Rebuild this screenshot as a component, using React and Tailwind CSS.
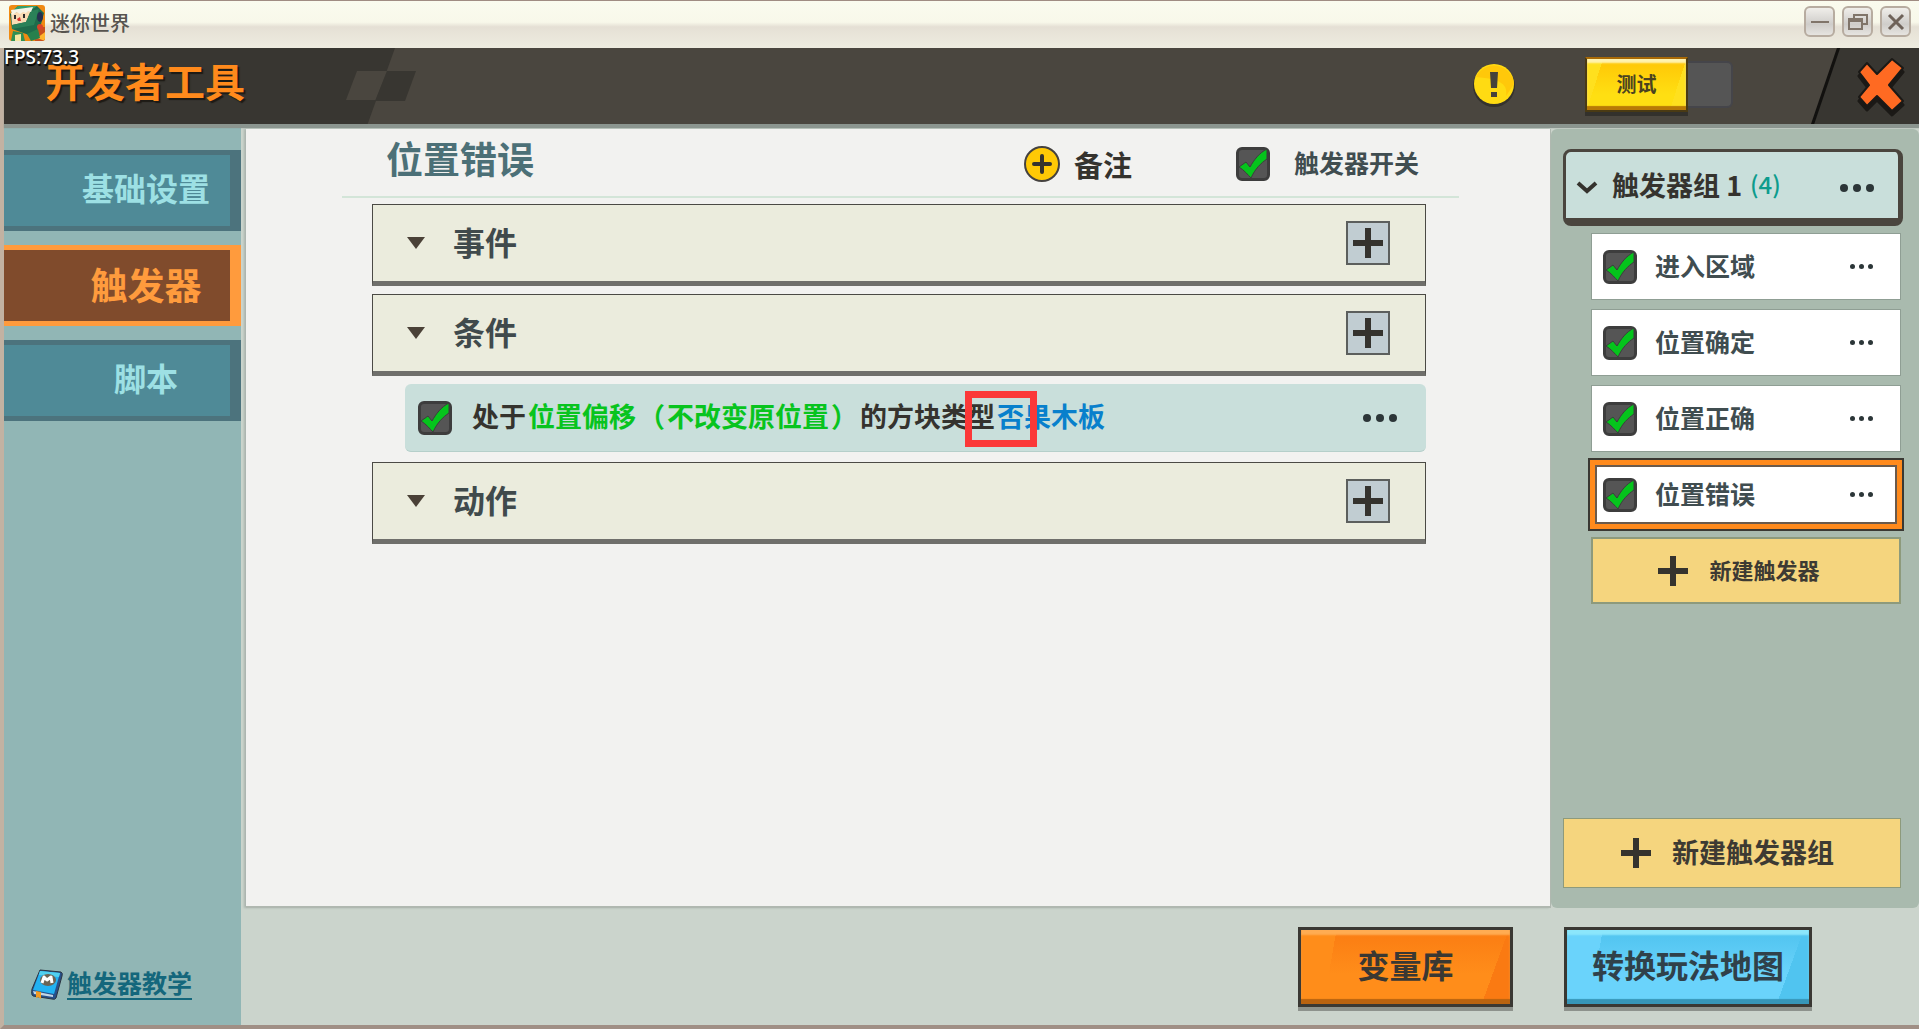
import { useState } from 'react';

const TRIGGERS = [
    { id: 1, name: '进入区域' },
    { id: 2, name: '位置确定' },
    { id: 3, name: '位置正确' },
    { id: 4, name: '位置错误' }
];

const MENU = [
    { id: 'base', label: '基础设置' },
    { id: 'trigger', label: '触发器' },
    { id: 'script', label: '脚本' }
];

const Check = ({ id, label }) => {
    const [checked, setChecked] = useState(true);

    return (
        <span className="grid h-[34px] w-[34px] shrink-0 *:[grid-area:1/1]">
            <input
                id={id}
                type="checkbox"
                aria-label={label}
                checked={checked}
                onChange={() => setChecked(!checked)}
                className="h-[34px] w-[34px] appearance-none rounded-md border-3 border-[#3d3d3d] bg-[#555555]"
            />
            {checked && (
                <svg
                    viewBox="0 0 34 34"
                    className="pointer-events-none h-[34px] w-[34px]">
                    <path
                        d="M3 20 L10 15 L14 20 C18 13 23 6 31 2 V12 C25 16 19 22 15 31 C12 28 8 23 3 20Z"
                        fill="#05c41c"
                        stroke="#3d3d3d"
                        strokeWidth="1"
                    />
                </svg>
            )}
        </span>
    );
};

const Dots = ({ small }) => (
    <button
        type="button"
        aria-label="更多"
        className={
            small
                ? 'flex gap-1 py-2 *:h-[5px] *:w-[5px]'
                : 'flex gap-[5px] py-2 *:h-2 *:w-2'
        }>
        <span className="rounded-full bg-[#2c3638]" />
        <span className="rounded-full bg-[#2c3638]" />
        <span className="rounded-full bg-[#2c3638]" />
    </button>
);

const Plus = () => (
    <svg viewBox="0 0 30 30" className="h-[30px] w-[30px] shrink-0">
        <path d="M15 0 V30 M0 15 H30" stroke="#35332e" strokeWidth="6" />
    </svg>
);

const Section = ({ title }) => (
    <section className="flex h-[82px] items-center border border-b-5 border-[#4b4a45] border-b-[#6f6f6b] bg-[#ebecdd] pr-[35px] pl-[34px]">
        <svg viewBox="0 0 18 12" className="mr-7 h-3 w-[18px]">
            <path d="M0 0 H18 L9 12Z" fill="#4a4137" />
        </svg>
        <h2 className="pb-1 text-[32px] leading-none font-bold text-[#404a4c]">
            {title}
        </h2>
        <button
            type="button"
            aria-label={`添加${title}`}
            className="ml-auto flex h-11 w-11 items-center justify-center border-2 border-[#5c5f5d] bg-[#c1cdd2]">
            <Plus />
        </button>
    </section>
);

const TitleBar = () => (
    <div className="flex h-12 items-center border-t border-[#a08c82] bg-[linear-gradient(#fafbee_0%,#f8f8ea_45%,#e5e0d5_55%,#eeece0_100%)] pr-2 pl-[9px]">
        <svg viewBox="0 0 36 36" className="mb-1 h-9 w-9">
            <defs>
                <clipPath id="logo">
                    <rect width="36" height="36" rx="3" />
                </clipPath>
            </defs>
            <g clipPath="url(#logo)">
                <rect width="36" height="36" fill="#f08a12" />
                <path d="M26 22 H36 V36 H26Z" fill="#c9501e" />
                <path d="M28 33 L36 27 V36Z" fill="#ffb52e" />
                <path d="M1 9 L9 1 H28 L35 8 L31 23 L20 30 L3 24Z" fill="#1f6b4b" />
                <path d="M9 1 H28 L22 5 L2 7Z" fill="#35a06c" />
                <path d="M2 8 L22 5 L17 17 L3 20Z" fill="#f8dcb4" />
                <path d="M17 17 L22 6 L30 4 L25 20 L3 24 V20Z" fill="#2a8158" />
                <path d="M2 5 L24 2 L22 7 L19 6 L17 8 L14 7 L11 9 L8 7 L3 10Z" fill="#f5f3e4" />
                <rect x="5" y="10" width="2" height="4" fill="#2b2b2b" />
                <rect x="14" y="9" width="2" height="4" fill="#2b2b2b" />
                <path d="M8 14 L11 12 L12 16 H9Z" fill="#d8342c" />
                <path d="M4 26 L14 28 L16 36 H2Z" fill="#2f9055" />
                <path d="M6 30 L12 29 V36 H6Z" fill="#f5e6a2" />
                <path d="M18 29 L29 24 L31 33 L22 36Z" fill="#27804d" />
                <ellipse cx="31" cy="12" rx="3" ry="5" fill="#26304f" />
                <circle cx="31" cy="22" r="3" fill="#d9442a" />
            </g>
        </svg>
        <span className="ml-[5px] pb-1 text-[20px] leading-none font-medium text-[#57544f]">
            迷你世界
        </span>
        <div className="mb-[6px] ml-auto flex gap-[7px] *:flex *:h-[31px] *:w-[31px] *:items-center *:justify-center *:rounded-md *:border-2 *:border-[#b7aca0] *:bg-[linear-gradient(#f0eeea,#cfcdca_60%,#e6e4e0)]">
            <button type="button" aria-label="最小化">
                <svg viewBox="0 0 20 20" className="h-5 w-5">
                    <path d="M1 10 H19" stroke="#80756a" strokeWidth="2" />
                </svg>
            </button>
            <button type="button" aria-label="还原">
                <svg viewBox="0 0 20 20" className="h-5 w-5" fill="none">
                    <path
                        d="M6 6 V3 H19 V12 H15 M1 7 H14 V17 H1Z M1 9 H14"
                        stroke="#80756a"
                        strokeWidth="2"
                    />
                </svg>
            </button>
            <button type="button" aria-label="关闭窗口">
                <svg viewBox="0 0 20 20" className="h-5 w-5">
                    <path
                        d="M3 3 L17 17 M17 3 L3 17"
                        stroke="#6e6259"
                        strokeWidth="3"
                    />
                </svg>
            </button>
        </div>
    </div>
);

const Header = () => (
    <header className="relative z-10 flex h-[76px] items-center bg-[#4a463f] shadow-[0_4px_1px_#8b958f]">
        <div className="h-full w-[391px] shrink-0 bg-[#383631] [clip-path:polygon(0_0,100%_0,93%_100%,0_100%)]">
            <h1 className="pt-3 pl-[41px] text-[40px] leading-none font-bold text-[#ff8a1c] [text-shadow:2px_2px_1px_#1d1a15]">
                开发者工具
            </h1>
        </div>
        <span className="absolute top-0 left-0 font-['Noto_Sans'] text-[19px] leading-[18px] font-medium text-white [text-shadow:1px_2px_1px_#000]">
            FPS:73.3
        </span>
        <svg
            viewBox="0 0 70 30"
            className="absolute top-[23px] left-[342px] h-[30px] w-[70px]">
            <path d="M11 0 H41 L30 29 H0Z" fill="#4a463f" />
            <path d="M41 0 H70 L59 30 H29Z" fill="#383631" />
        </svg>
        <div className="ml-auto flex h-full items-center">
            <button type="button" aria-label="提示" className="mr-[69px] mb-[3px]">
                <svg viewBox="0 0 44 44" className="h-11 w-11">
                    <circle cx="22" cy="23" r="21" fill="#34322d" />
                    <circle cx="22" cy="21" r="20" fill="#ffdb12" />
                    <path
                        d="M4 14 A20 20 0 0 1 42 21 L34 33 C36 22 30 16 4 14Z"
                        fill="#ffc80a"
                    />
                    <path d="M18 9 H26 L25 25 H19Z" fill="#45423b" />
                    <rect x="19" y="29" width="6" height="5" fill="#45423b" />
                </svg>
            </button>
            <div className="mr-[78px] flex items-center pb-1">
                <button
                    type="button"
                    className="h-[55px] w-[103px] border-2 border-[#4a3a14] border-t-[#a96a07] bg-[linear-gradient(108deg,#ffe01e_14%,transparent_14%,transparent_86%,#ffe01e_86%),linear-gradient(#ffc505,#ffdf12_70%)] text-[20px] leading-none font-bold text-[#4b4320] shadow-[inset_0_-4px_1px_#b97a06,inset_0_4px_2px_#fff3b0,0_4px_0_#33312c]">
                    测试
                </button>
                <span className="h-[47px] w-[45px] rounded-r-md border-2 border-l-0 border-[#45454a] bg-[#555555]" />
            </div>
            <div className="flex h-full w-[108px] items-center bg-[#12110f] [clip-path:polygon(24%_0,100%_0,100%_100%,0_100%)]">
                <div className="flex h-full w-full items-center justify-end bg-[#383631] pr-[14px] [clip-path:polygon(27%_0,100%_0,100%_100%,3%_100%)]">
                    <button type="button" aria-label="关闭">
                        <svg viewBox="-3 -3 50 62" className="h-[62px] w-[50px]">
                            <path
                                d="M1 18 L9 9 L19 20 L34 5 L45 14 L31 31 L45 47 L34 57 L19 42 L9 52 L1 43 L11 31Z"
                                fill="#1b1916"
                                stroke="#1b1916"
                                strokeWidth="3"
                                strokeLinejoin="round"
                            />
                            <path
                                d="M1 14 L9 5 L19 16 L34 1 L45 10 L31 27 L45 43 L34 53 L19 38 L9 48 L1 39 L11 27Z"
                                fill="#ff6a22"
                                stroke="#1b1916"
                                strokeWidth="2"
                                strokeLinejoin="round"
                            />
                        </svg>
                    </button>
                </div>
            </div>
        </div>
    </header>
);

const Sidebar = ({ active, onSelect }) => (
    <aside className="flex w-[237px] shrink-0 flex-col bg-[#91b6b5] pt-[26px]">
        <nav className="flex flex-col gap-[14px]">
            {MENU.map((item) => (
                <button
                    key={item.id}
                    type="button"
                    onClick={() => onSelect(item.id)}
                    className={
                        item.id === active
                            ? 'h-[81px] border-y-5 border-r-[11px] border-[#ff9b3d] bg-[#804b2c] pb-[2px] pl-[58px] text-[37px] leading-none font-bold text-[#ff9b3d]'
                            : 'h-[81px] border-y-5 border-r-[11px] border-[#4c737d] bg-[#4f8a97] pb-2 pl-[58px] text-[32px] leading-none font-bold text-[#9de0e4]'
                    }>
                    {item.label}
                </button>
            ))}
        </nav>
        <a
            href="#tutorial"
            className="mt-auto mb-6 ml-[26px] flex items-center gap-[3px] self-start text-[#14677c]">
            <svg viewBox="0 0 34 32" className="h-8 w-[34px]">
                <path
                    d="M10 1 L31 3 Q33 4 32 7 L26 29 Q25 31 22 30 L3 27 Q1 26 2 20Z"
                    fill="#27508a"
                    stroke="#2b3440"
                    strokeWidth="1"
                />
                <path d="M3 22 L23 26 L23 28 L4 25Z" fill="#c4d6e6" />
                <path d="M10 2 L30 4 L24 25 L3 21Z" fill="#22b2f2" />
                <path d="M10 2 L30 4 L29 8 L9 6Z" fill="#52d0ef" />
                <path d="M6 22 L11 23 V30 L8 28 L6 29Z" fill="#f39a20" />
                <ellipse cx="18" cy="11" rx="8" ry="6" fill="#6b6455" />
                <path
                    d="M12 14 L14 8 L17 11 L21 8 L22 14"
                    fill="none"
                    stroke="#ffffff"
                    strokeWidth="3"
                    strokeLinejoin="round"
                />
            </svg>
            <span className="border-b-2 border-[#14677c] pb-[3px] text-[25px] leading-none font-bold">
                触发器教学
            </span>
        </a>
    </aside>
);

const Editor = () => (
    <main className="flex-1 border-r border-b-2 border-[#b0b8b0] bg-[#f2f2f0] shadow-[-2px_0_2px_#aab5ae]">
        <div className="mr-[91px] ml-24 flex h-[69px] items-center border-b-2 border-[#d3e5d8] pr-10 pl-11">
            <h2 className="mb-2 text-[37px] leading-none font-bold text-[#4c7077]">
                位置错误
            </h2>
            <button
                type="button"
                className="mt-[3px] ml-auto flex items-center gap-[14px] text-[29px] leading-none font-bold text-[#35332e]">
                <svg viewBox="0 0 36 36" className="h-9 w-9">
                    <circle
                        cx="18"
                        cy="18"
                        r="17"
                        fill="#ffc905"
                        stroke="#45423f"
                        strokeWidth="2"
                    />
                    <path
                        d="M18 10 V26 M10 18 H26"
                        stroke="#35332e"
                        strokeWidth="4"
                        strokeLinecap="round"
                    />
                </svg>
                备注
            </button>
            <div className="mt-[2px] ml-[104px] flex items-center gap-6">
                <Check id="trigger-switch" />
                <label
                    htmlFor="trigger-switch"
                    className="pb-[2px] text-[25px] leading-none font-bold text-[#404d50]">
                    触发器开关
                </label>
            </div>
        </div>
        <div className="mt-[6px] mr-[124px] ml-[126px] flex flex-col gap-2">
            <Section title="事件" />
            <Section title="条件" />
            <div className="mb-[2px] ml-[33px] flex h-[68px] items-center rounded-md border-b border-[#b5cfca] bg-[#c9dfdb] pr-[29px] pl-[13px]">
                <Check label="启用条件" />
                <p className="mb-[5px] ml-5 flex gap-[2px] text-[27px] leading-none font-bold text-[#35332e]">
                    <span>处于</span>
                    <span className="flex gap-[2px] text-[#08c41e]">
                        <span>位置偏移</span>
                        <span>（</span>
                        <span>不改变原位置</span>
                        <span>）</span>
                    </span>
                    <span>的方块类型</span>
                    <span className="relative text-[#0880cc]">
                        否果木板
                        <span className="absolute -top-[11px] -left-8 h-14 w-[72px] border-7 border-[#fb3838]" />
                    </span>
                </p>
                <div className="ml-auto flex">
                    <Dots />
                </div>
            </div>
            <Section title="动作" />
        </div>
    </main>
);

const TriggerPanel = () => {
    const [selected, setSelected] = useState(4);

    return (
        <aside className="flex w-[368px] shrink-0 flex-col rounded-md bg-[#a9baae] pt-5 pr-4 pb-5 pl-3">
            <div className="flex h-[77px] items-center rounded-lg border-3 border-r-5 border-b-8 border-[#4a453e] bg-[#c9dfdb] pt-[6px] pr-[24px] pl-[10px]">
                <svg viewBox="0 0 22 14" className="h-[14px] w-[22px]">
                    <path
                        d="M2 2 L11 10 L20 2"
                        fill="none"
                        stroke="#35332e"
                        strokeWidth="4"
                    />
                </svg>
                <h2 className="mb-2 ml-[14px] flex items-center gap-2 text-[27px] leading-none font-bold text-[#35332e]">
                    触发器组 1
                    <span className="text-[24px] font-medium text-[#0d9c8d]">
                        (4)
                    </span>
                </h2>
                <div className="ml-auto flex">
                    <Dots />
                </div>
            </div>
            <ul className="mt-[7px] mr-[2px] ml-7 flex flex-col gap-[9px]">
                {TRIGGERS.map((trigger) => (
                    <li
                        key={trigger.id}
                        onClick={() => setSelected(trigger.id)}
                        className={
                            trigger.id === selected
                                ? 'flex h-[67px] items-center bg-white pr-7 pl-3 shadow-[inset_0_0_0_4px_#ff8a1c,inset_0_0_0_6px_#6a5a4c,0_0_0_1px_#ff8a1c,0_0_0_3px_#3a3833]'
                                : 'flex h-[67px] items-center border border-[#8f9e94] bg-white pr-[27px] pl-[11px]'
                        }>
                        <Check label={trigger.name} />
                        <span className="ml-[18px] pb-[2px] text-[25px] leading-none font-bold text-[#404d50]">
                            {trigger.name}
                        </span>
                        <div className="ml-auto flex">
                            <Dots small />
                        </div>
                    </li>
                ))}
                <li>
                    <button
                        type="button"
                        className="flex h-[67px] w-full items-center justify-center gap-[21px] border-2 border-[#8d9a7c] bg-[#f5d57e] pr-[14px] text-[22px] leading-none font-bold text-[#3d3a33]">
                        <Plus />
                        <span className="pb-[3px]">新建触发器</span>
                    </button>
                </li>
            </ul>
            <div className="mt-auto mr-[2px]">
                <button
                    type="button"
                    className="flex h-[70px] w-full items-center justify-center gap-[21px] border border-[#8d9a7c] bg-[#f5d57e] pr-[9px] text-[27px] leading-none font-bold text-[#3d3a33]">
                    <Plus />
                    <span className="pb-[3px]">新建触发器组</span>
                </button>
            </div>
        </aside>
    );
};

const App = () => {
    const [active, setActive] = useState('trigger');

    return (
        <div className="flex min-h-screen flex-col bg-[#cbd4cc] font-['Noto_Sans_CJK_SC',sans-serif]">
            <TitleBar />
            <div className="flex flex-1 flex-col border-b-4 border-l-4 border-b-[#a08f85] border-l-[#c2b2a2]">
                <Header />
                <div className="flex flex-1">
                    <Sidebar active={active} onSelect={setActive} />
                    <div className="flex flex-1 flex-col pl-[5px]">
                        <div className="flex flex-1 pt-[5px]">
                            <Editor />
                            <TriggerPanel />
                        </div>
                        <footer className="flex h-[117px] items-start justify-end gap-[51px] pt-[19px] pr-[107px]">
                            <button
                                type="button"
                                className="h-[80px] w-[215px] border-3 border-[#3a3833] bg-[linear-gradient(100deg,#ff8d1a_16%,transparent_16%),linear-gradient(110deg,transparent_88%,#fa7a12_88%),linear-gradient(#fb7c12,#ff8d1a_60%)] pb-[6px] text-[32px] leading-none font-bold text-[#3a3833] shadow-[inset_0_-5px_1px_#b96310,inset_0_5px_2px_#ffac52,0_4px_0_#8d928c]">
                                变量库
                            </button>
                            <button
                                type="button"
                                className="h-[80px] w-[248px] border-3 border-[#3a3833] bg-[linear-gradient(100deg,#6ad3fb_14%,transparent_14%),linear-gradient(110deg,transparent_88%,#50c4f0_88%),linear-gradient(#4fc3ef,#6ad3fb_60%)] pb-[6px] text-[32px] leading-none font-bold text-[#30414a] shadow-[inset_0_-5px_1px_#3796b8,inset_0_5px_2px_#8ce6fb,0_4px_0_#8d928c]">
                                转换玩法地图
                            </button>
                        </footer>
                    </div>
                </div>
            </div>
        </div>
    );
};

export default App;
